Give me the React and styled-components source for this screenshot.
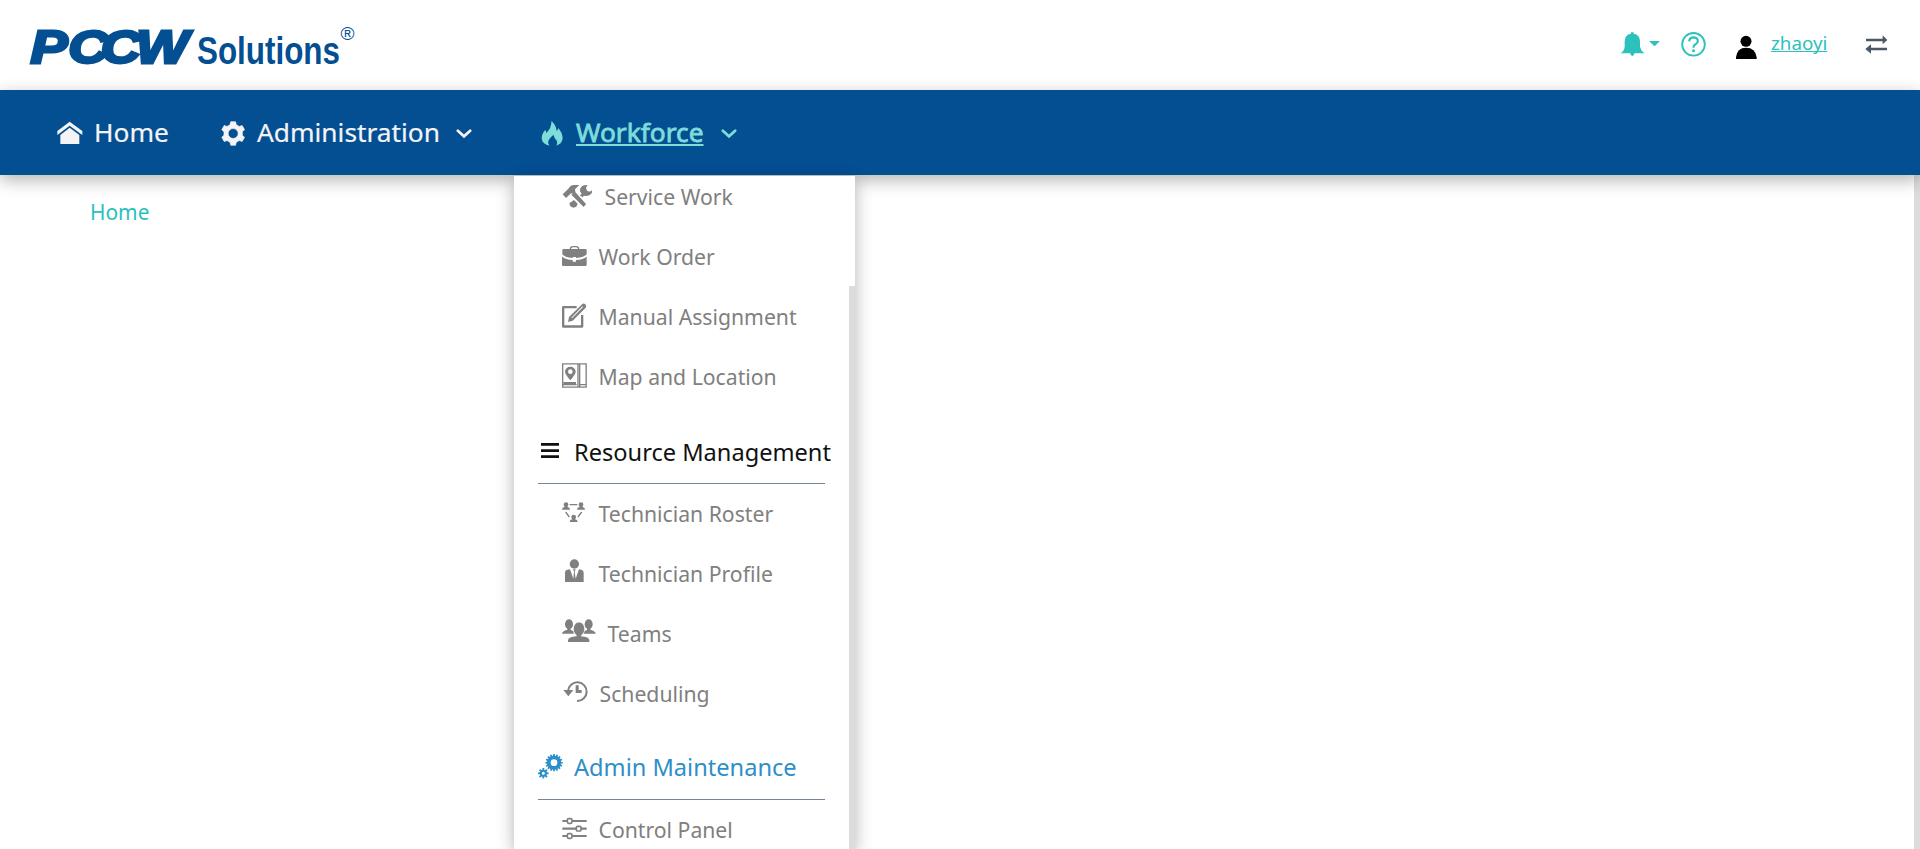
import React from "react";
import styled, { createGlobalStyle } from "styled-components";

const GlobalStyle = createGlobalStyle`
  * { box-sizing: border-box; }
  body {
    margin: 0;
    height: 849px;
    overflow: hidden;
    background: #fff;
    font-family: "Noto Sans", "Open Sans", sans-serif;
  }
`;

const Page = styled.div`
  height: 849px;
  display: flex;
  flex-direction: column;
  overflow: hidden;
`;

const Header = styled.header`
  height: 90px;
  flex: none;
  display: flex;
  justify-content: space-between;
  padding: 0 32px 0 24px;
`;

const Logo = styled.svg`
  width: 340px;
  height: 90px;
  overflow: visible;
  fill: #034f92;
  font-family: "Liberation Sans", Arial, sans-serif;
  font-weight: 700;
`;

const HeaderTools = styled.div`
  display: flex;
  align-items: center;
`;

const Icon = styled.svg`
  flex: none;
  display: block;
  width: ${(p) => p.$w}px;
  height: 30px;
  margin-right: ${(p) => p.$gap ?? 0}px;
  color: ${(p) => p.$color || "inherit"};
  fill: currentColor;
`;

const UserLink = styled.a`
  width: 57px;
  margin-right: 37px;
  padding-bottom: 4px;
  font-size: 18.800px;
  line-height: 26px;
  color: #2bc1bd;
  text-decoration: underline;
  text-decoration-thickness: 1px;
  text-underline-offset: 1px;
  text-decoration-skip-ink: none;
`;

const NavBar = styled.nav`
  position: relative;
  z-index: 2;
  height: 85px;
  flex: none;
  display: flex;
  align-items: center;
  padding-left: 57px;
  background: #034f92;
  color: #f4f4f6;
  box-shadow: 0 5px 16px rgba(0, 0, 0, 0.3);
`;

const NavItem = styled.div`
  position: relative;
  display: flex;
  align-items: center;
  height: 85px;
  margin-right: ${(p) => p.$gap ?? 0}px;
  color: ${(p) => (p.$active ? "#7edcd9" : "inherit")};
`;

const NavLabel = styled.span`
  width: ${(p) => p.$w}px;
  padding-bottom: 2px;
  font-size: 26.300px;
  white-space: nowrap;
  -webkit-text-stroke: ${(p) => (p.$active ? "0.8px" : "0.2px")} currentColor;
  text-decoration: ${(p) => (p.$active ? "underline" : "none")};
  text-decoration-thickness: 2px;
  text-underline-offset: 2px;
  text-decoration-skip-ink: none;
`;

const Dropdown = styled.div`
  position: absolute;
  top: 86px;
  left: -27px;
  width: 341px;
  height: 673px;
  overflow: hidden;
  background: #fff;
  box-shadow: 0 5px 16px rgba(0, 0, 0, 0.3);
  display: flex;
  justify-content: space-between;
`;

const MenuList = styled.div`
  width: 311px;
  margin-top: -9px;
  padding-left: 24px;
`;

const MenuTrack = styled.div`
  width: 6px;
  padding-top: 110px;
`;

const Thumb = styled.div`
  width: 6px;
  height: 100%;
  background: #dcdcdc;
`;

const MenuItem = styled.div`
  display: flex;
  align-items: center;
  height: 60px;
  padding-left: 24px;
  font-size: 21.200px;
  color: #808080;
  white-space: nowrap;
`;

const ItemLabel = styled.span`
  padding-bottom: 1px;
`;

const MenuHeading = styled.div`
  display: flex;
  align-items: center;
  height: ${(p) => p.$h}px;
  padding-top: ${(p) => p.$top}px;
  border-bottom: 1px solid #76859a;
  font-size: 23.600px;
  color: ${(p) => p.$color};
  white-space: nowrap;
`;

const Content = styled.main`
  flex: 1;
  display: flex;
  justify-content: space-between;
`;

const Breadcrumb = styled.div`
  padding: 22px 0 0 90px;
  font-size: 20.900px;
  line-height: 30px;
  color: #2bc1bd;
`;

const PageThumb = styled.div`
  width: 6px;
  background: #dcdcdc;
`;

function gearPath(cx, cy, inner, outer, teeth, ratio = 0.5) {
  const pts = [];
  const step = (Math.PI * 2) / teeth;
  for (let i = 0; i < teeth; i++) {
    const a = i * step - Math.PI / 2;
    const h = (step * ratio) / 2;
    [
      [a - h * 1.35, inner],
      [a - h * 0.8, outer],
      [a + h * 0.8, outer],
      [a + h * 1.35, inner],
    ].forEach(([t, r]) =>
      pts.push(`${(cx + Math.cos(t) * r).toFixed(2)} ${(cy + Math.sin(t) * r).toFixed(2)}`)
    );
  }
  return `M${pts.join("L")}Z`;
}

function circlePath(cx, cy, r) {
  return `M${cx - r} ${cy}a${r} ${r} 0 1 0 ${2 * r} 0a${r} ${r} 0 1 0 ${-2 * r} 0Z`;
}

const Chevron = () => (
  <Icon $w={16} viewBox="0 0 48 90">
    <path d="M5.500 38L24 55 42.500 38" fill="none" stroke="currentColor" strokeWidth="8" strokeLinecap="round" />
  </Icon>
);

const ToolsIcon = () => (
  <Icon $w={30} $gap={12.500} viewBox="186 66 90 90">
    <path d="M188 103L205 86 212 78Q216 75 222 75L238 75 225 88 226 95 220 101 213 100 198 114Z" />
    <path d="M225 95L258 132 251 141 214 104Z" />
    <path d="M245 101L240 94Q239 80 252 76L263 75 258 83 261 92 269 95 278 90Q276 108 257 108L252 107 247 112 240 106Z" />
    <path d="M222 120L233 131 229 140 220 143 211 139 208 130Z" />
  </Icon>
);

const BriefcaseIcon = () => (
  <Icon $w={25} $gap={11.500} viewBox="186 246 75 90">
    <path d="M211 267Q211 260 219 260L228 260Q236 260 236 267" fill="none" stroke="currentColor" strokeWidth="4" />
    <path d="M191 267H256Q260 267 260 271V283Q253 292 228 294V291H218V294Q193 292 187 283V271Q187 267 191 267Z" />
    <path d="M186 290Q197 298 218 300V305H228V300Q250 298 260 290V315Q260 318 256 318H190Q186 318 186 315Z" />
  </Icon>
);

const EditIcon = () => (
  <Icon $w={25} $gap={11.500} viewBox="186 36 75 90">
    <path d="M230 51.500H189.500V109.500H246.500V75" fill="none" stroke="currentColor" strokeWidth="7" strokeLinejoin="round" />
    <path fillRule="evenodd" d="M204 96L207 81 247 42Q251 39 256 43 261 48 257 53L218 92ZM214 83L216 85 249 51 247 49Z" />
  </Icon>
);

const MapIcon = () => (
  <Icon $w={25} $gap={11.500} viewBox="186 216 75 90">
    <path d="M188 221.500H258.500V291.500H188ZM234 221V291M239 221V291M239 284H258M188 284H230" fill="none" stroke="currentColor" strokeWidth="4" />
    <path d="M190 279H228" stroke="currentColor" strokeWidth="6" />
    <path fillRule="evenodd" d={`M211 271Q195 252 195 245A16 15 0 0 1 227 245Q227 252 211 271Z${circlePath(211, 245, 7)}`} />
  </Icon>
);

const MenuBarsIcon = () => (
  <Icon $w={24} $gap={12} viewBox="114 441 72 90">
    <path d="M123 459H177V467H123ZM123 478H177V486H123ZM123 496H177V504H123Z" />
  </Icon>
);

const RosterPerson = ({ x, y }) => (
  <path
    transform={`translate(${x} ${y})`}
    d="M0 0Q7 0 7 6 7 11 4 14 12 15 12 22H-12Q-12 15 -4 14 -7 11 -7 6 -7 0 0 0Z"
  />
);

const RosterIcon = () => (
  <Icon $w={25} $gap={11.500} viewBox="186 27 75 90">
    <RosterPerson x={198} y={37} />
    <RosterPerson x={243} y={37} />
    <RosterPerson x={221} y={74} />
    <path d="M209 44H232M197 66L208 81M245 66L234 81" stroke="currentColor" strokeWidth="4" />
  </Icon>
);

const ProfileIcon = () => (
  <Icon $w={25} $gap={11.500} viewBox="186 207 75 90">
    <circle cx="223" cy="222" r="14" />
    <path d="M195 276V248Q195 240 203 239L210 238 220 266 222 245 219 238H227L224 245 227 266 237 238 244 239Q251 240 251 248V276Z" />
  </Icon>
);

const TeamsIcon = () => (
  <Icon $w={34} $gap={11.500} viewBox="186 387 102 90">
    <ellipse cx="207" cy="403" rx="12" ry="15" />
    <ellipse cx="266" cy="403" rx="12" ry="15" />
    <path d="M202 414H212V420L221 424V431H186Q186 423 202 419ZM261 414H271V419Q287 423 287 431H252V424L261 420Z" />
    <ellipse cx="237" cy="417" rx="17" ry="21" stroke="#fff" strokeWidth="2" />
    <path d="M230 433H243V439Q268 441 268 451V456H204V451Q204 441 230 439Z" />
  </Icon>
);

const HistoryIcon = () => (
  <Icon $w={26} $gap={11.500} viewBox="186 117 78 90">
    <path d="M204 153A28 28 0 1 1 231 183" fill="none" stroke="currentColor" strokeWidth="6" />
    <path d="M190 150H220L205 169Z" />
    <path d="M227 136H236V150H245V159H227Z" />
  </Icon>
);

const GearsIcon = () => (
  <Icon $w={25} $gap={11} viewBox="113 336 75 90">
    <path fillRule="evenodd" d={gearPath(161, 368, 21, 26, 16, 0.55) + circlePath(161, 368, 10)} />
    <path fillRule="evenodd" d={gearPath(129, 400, 11, 16, 8, 0.5) + circlePath(129, 400, 4.5)} />
  </Icon>
);

const SlidersIcon = () => (
  <Icon $w={25} $gap={11.500} viewBox="186 525 75 90">
    <path d="M187 543H260M187 566H260M187 588H260" stroke="currentColor" strokeWidth="6.500" />
    <g fill="#fff" stroke="currentColor" strokeWidth="5">
      <rect x="202" y="536" width="14" height="14" rx="4" />
      <rect x="229" y="559" width="14" height="14" rx="4" />
      <rect x="202" y="581" width="14" height="14" rx="4" />
    </g>
  </Icon>
);

const Entry = ({ icon: Glyph, children }) => (
  <MenuItem>
    <Glyph />
    <ItemLabel>{children}</ItemLabel>
  </MenuItem>
);

export default function App() {
  return (
    <Page>
      <GlobalStyle />
      <Header>
        <Logo viewBox="24 0 340 90">
          <g transform="translate(30.500 63.200) scale(1.220 1)" fontStyle="italic" fontSize="45.500" stroke="#034f92" strokeWidth="2.800">
            <text x="0 31 57.500 86.500" y="0">PCCW</text>
          </g>
          <text x="197" y="63.800" fontSize="38" textLength="143" lengthAdjust="spacingAndGlyphs">Solutions</text>
          <text x="340.500" y="39.500" fontSize="19" fontWeight="400">®</text>
        </Logo>
        <HeaderTools>
          <Icon $w={25} $gap={4} $color="#2bc1bd" viewBox="121 90 75 90">
            <path d="M154 97H162V101Q181 104 181 124V140Q184 153 195 160H164Q164 168 158 168 152 168 152 160H122Q134 153 135 140V124Q135 104 154 101Z" />
          </Icon>
          <Icon $w={11} $gap={20.500} $color="#2bc1bd" viewBox="207 90 33 90">
            <path d="M207 123H240L223.500 139Z" />
          </Icon>
          <Icon $w={25} $gap={30.500} $color="#2bc1bd" viewBox="301.500 90 75 90">
            <circle cx="339" cy="133" r="34" fill="none" stroke="currentColor" strokeWidth="5.500" />
            <path d="M326 124Q327 112 340 112 352 113 352 123 352 129 345 133 339 136 339 143" fill="none" stroke="currentColor" strokeWidth="6.500" />
            <circle cx="339" cy="152" r="4.500" />
          </Icon>
          <Icon $w={21} $gap={14} $color="#000" viewBox="468 90 63 90">
            <circle cx="498" cy="124" r="16.500" />
            <path d="M468 177V172Q471 143 498 143 526 143 530 172V177Z" />
          </Icon>
          <UserLink>zhaoyi</UserLink>
          <Icon $w={23} $color="#4a5868" viewBox="855 90 69 90">
            <path d="M858 116H908V106L922 120 908 133V124H858ZM921 143H873V133L856 147 873 161V151H921Z" />
          </Icon>
        </HeaderTools>
      </Header>
      <NavBar>
        <NavItem $gap={53}>
          <Icon $w={26} $gap={11} viewBox="171 354 78 90">
            <path d="M172 393L209 365 247 393V405L209 377 172 405Z" />
            <path d="M209 383L238 405V432H181V405Z" />
          </Icon>
          <NavLabel $w={74}>Home</NavLabel>
        </NavItem>
        <NavItem $gap={69}>
          <Icon $w={25} $gap={11} viewBox="663 354 75 90">
            <path
              fillRule="evenodd"
              strokeLinejoin="round"
              stroke="currentColor"
              strokeWidth="2"
              d={gearPath(699.5, 400.5, 28, 36, 6, 0.48) + circlePath(699.5, 400.5, 15)}
            />
          </Icon>
          <NavLabel $w={199}>Administration</NavLabel>
          <Chevron />
        </NavItem>
        <NavItem $active>
          <Icon $w={22} $gap={13} viewBox="955 114 63 90" preserveAspectRatio="none">
            <path d="M985 123Q998 135 1000 153 1004 150 1004 144 1016 157 1017 174 1017 190 999 197 1004 185 998 179 993 175 991 164 983 170 977 180 973 188 979 197 957 191 957 174 957 161 968 149L970 159Q985 145 985 123Z" />
          </Icon>
          <NavLabel $active $w={145}>Workforce</NavLabel>
          <Chevron />
          <Dropdown>
            <MenuList>
              <Entry icon={ToolsIcon}>Service Work</Entry>
              <Entry icon={BriefcaseIcon}>Work Order</Entry>
              <Entry icon={EditIcon}>Manual Assignment</Entry>
              <Entry icon={MapIcon}>Map and Location</Entry>
              <MenuHeading $h={77} $top={13} $color="#111"><MenuBarsIcon />Resource Management</MenuHeading>
              <Entry icon={RosterIcon}>Technician Roster</Entry>
              <Entry icon={ProfileIcon}>Technician Profile</Entry>
              <Entry icon={TeamsIcon}>Teams</Entry>
              <Entry icon={HistoryIcon}>Scheduling</Entry>
              <MenuHeading $h={76} $top={11} $color="#2d8fc9"><GearsIcon />Admin Maintenance</MenuHeading>
              <Entry icon={SlidersIcon}>Control Panel</Entry>
            </MenuList>
            <MenuTrack><Thumb /></MenuTrack>
          </Dropdown>
        </NavItem>
      </NavBar>
      <Content>
        <Breadcrumb>Home</Breadcrumb>
        <PageThumb />
      </Content>
    </Page>
  );
}
